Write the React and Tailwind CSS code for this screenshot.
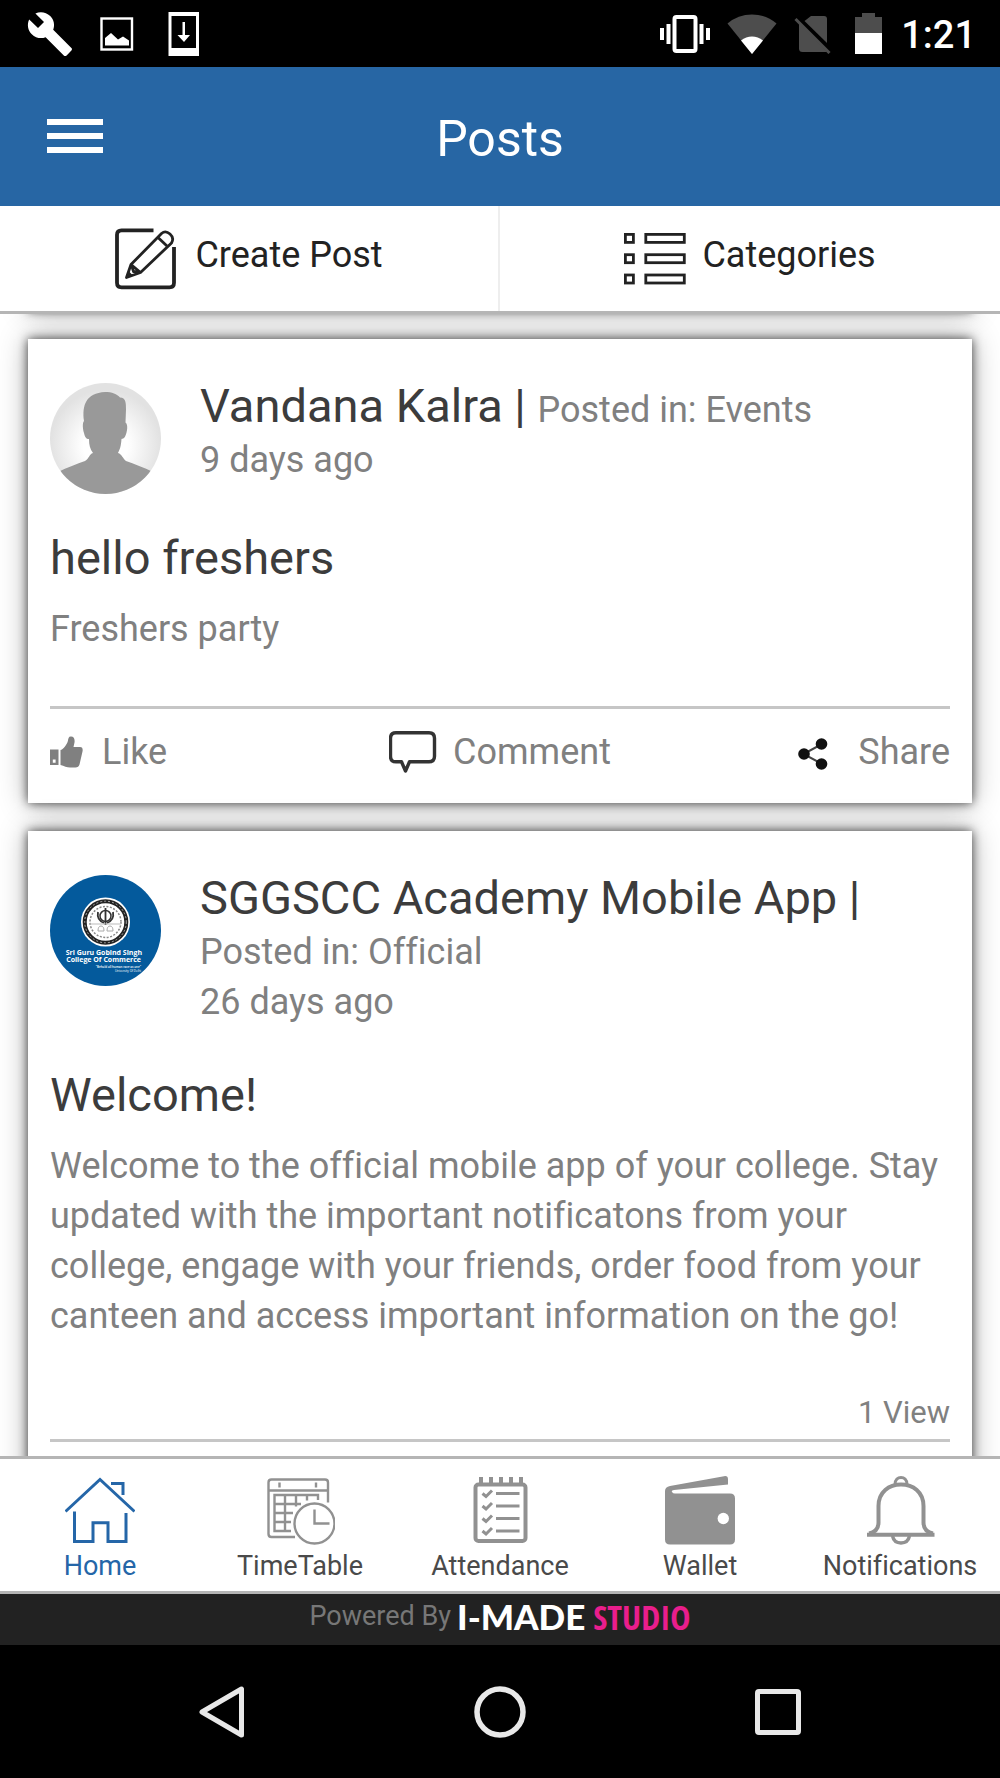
import React, { useState } from 'react';

/* ---------- Status bar icons ---------- */

const WrenchIcon = () => (
  <svg className="w-12 h-12" viewBox="0 0 24 24" fill="#fff">
    <path d="M22.7 19l-9.1-9.1c.9-2.3.4-5-1.5-6.9-2-2-5-2.4-7.4-1.3L9 6 6 9 1.6 4.7C.4 7.1.9 10.1 2.9 12.1c1.9 1.9 4.6 2.4 6.9 1.5l9.1 9.1c.4.4 1 .4 1.4 0l2.3-2.3c.5-.4.5-1.1.1-1.4z" />
  </svg>
);

const ImageIcon = () => (
  <svg className="w-[34px] h-[34px]" viewBox="0 0 34 34">
    <rect x="1.5" y="1.5" width="30.5" height="31" fill="none" stroke="#fff" strokeWidth="2.4" />
    <path d="M5 28.5V21l6-5 7 6.5 5-3 6 4v5z" fill="#fff" />
  </svg>
);

const DownloadIcon = () => (
  <svg className="w-8 h-11" viewBox="0 0 32 44">
    <path d="M0.5 0h30.5v44H0.5zM3.5 4v32h24.5V4z" fill="#fff" fillRule="evenodd" />
    <path d="M14.5 10h2.5v13h5L16 30l-6.5-7h5z" fill="#fff" />
  </svg>
);

const VibrateIcon = () => (
  <svg className="w-[50px] h-10" viewBox="0 0 50 40" fill="#fff">
    <rect x="14.5" y="3" width="21" height="34" rx="2" fill="none" stroke="#fff" strokeWidth="4" />
    <rect x="0" y="14" width="4" height="12" />
    <rect x="6.5" y="10" width="4" height="20" />
    <rect x="39.5" y="10" width="4" height="20" />
    <rect x="46" y="14" width="4" height="12" />
  </svg>
);

const WifiIcon = () => (
  <svg className="w-[50px] h-10" viewBox="0 0 50 40">
    <path d="M25 40L0.5 9.5Q11 0.5 25 0.5T49.5 9.5z" fill="#4d4d4d" />
    <path d="M25 40L14 26.5Q19 22.5 25 22.5T36 26.5z" fill="#fff" />
  </svg>
);

const NoSimIcon = () => (
  <svg className="w-[38px] h-10" viewBox="0 0 38 40">
    <path d="M17 2h13q3 0 3 3v24L10.5 7z" fill="#4d4d4d" />
    <path d="M5 9L33 38H8.5q-3.5 0-3.5-3.5z" fill="#4d4d4d" />
    <path d="M1.5 5L35.5 39" stroke="#4d4d4d" strokeWidth="3" />
  </svg>
);

const BatteryIcon = () => (
  <svg className="w-[27px] h-[41px]" viewBox="0 0 27 41">
    <path d="M7 0h13v4h7v17H0V4h7z" fill="#4d4d4d" />
    <rect y="20" width="27" height="21" fill="#fff" />
  </svg>
);

/* ---------- Toolbar icons ---------- */

const CreateIcon = () => (
  <svg className="w-[62px] h-[62px]" viewBox="0 0 62 62" fill="none" stroke="#222" strokeWidth="3.8">
    <path d="M38.5 2.3H6.5q-4.5 0-4.5 4.5v48q0 4.5 4.5 4.5h48q4.5 0 4.5-4.5V19" />
    <g strokeWidth="2.8" strokeLinejoin="round">
      <path d="M11.5 49.5L16 36.5L46.5 5.5q4-3.5 8.5 0.5t1.5 9L25.5 44.5z" />
      <path d="M43 9.5l9 8.5M16 36.5l9.5 8M16.5 37l2 6.5 6.5 1" />
    </g>
    <path d="M11 50l2.5-7 4.5 4.5z" fill="#222" stroke="none" />
  </svg>
);

const ListIcon = () => (
  <svg className="w-[62px] h-[52px]" viewBox="0 0 62 52" fill="none" stroke="#222" strokeWidth="2.8">
    {[1.4, 21.7, 42].map((y) => (
      <g key={y}>
        <rect x="1.4" y={y} width="8" height="8" />
        <rect x="21.8" y={y} width="38.5" height="8" />
      </g>
    ))}
  </svg>
);

/* ---------- Post icons ---------- */

const LikeIcon = () => (
  <svg className="w-[33px] h-8" viewBox="0 0 33 32">
    <path d="M0 13.5h8.5V29H0zM2.8 23.5v3.2h2.8v-3.2z" fill="#808080" fillRule="evenodd" />
    <path d="M10.5 14C13 13.5 17 9 18 4.5 18.5 1 19.5 0.5 21 0.5c3 0 4 3 3.5 6L23.5 11H30c2.5 0 3 2 2.5 4.5L29.5 28.5c-0.5 2-2 3-4 3h-5.5c-3 0-6-1.5-9.5-2.5z" fill="#808080" />
  </svg>
);

const CommentIcon = () => (
  <svg className="w-12 h-[42px]" viewBox="0 0 48 42">
    <path d="M7 1.8h33q5.5 0 5.5 5.5v18q0 5.5-5.5 5.5H20.5L16.5 40l-4-9.2H7q-5.5 0-5.5-5.5v-18q0-5.5 5.5-5.5z" fill="none" stroke="#333" strokeWidth="3.4" strokeLinejoin="round" />
  </svg>
);

const ShareIcon = () => (
  <svg className="w-[30px] h-8 mt-1" viewBox="0 0 30 32">
    <path d="M24 6L5.5 16L24 26" fill="none" stroke="#444" strokeWidth="2" />
    <g fill="#111">
      <circle cx="23.5" cy="6" r="5.8" />
      <circle cx="6" cy="16" r="5.8" />
      <circle cx="23.5" cy="26" r="5.8" />
    </g>
  </svg>
);

/* ---------- Avatars ---------- */

const PersonAvatar = () => (
  <svg className="w-[111px] h-[111px] rounded-full shrink-0 mt-1" viewBox="0 0 111 111">
    <defs>
      <radialGradient id="glow" cx="50%" cy="56%" r="50%">
        <stop offset="40%" stopColor="#fff" />
        <stop offset="100%" stopColor="#e2e2e2" />
      </radialGradient>
    </defs>
    <rect width="111" height="111" fill="url(#glow)" />
    <path
      d="M34 38C32 22 36 10 55 9c7 0 12 2 15 5.5 6 0 6 6 6 12l-0.5 13c3 2 1.5 10 0 13-1 3-2.5 3-4 3.500C71 63 70 66 68 70c4 1 5 6 8 8 8 3 18 6.500 27 11v22H8V89c9-4.500 19-8 27-11 4-2 4-7 8-8-3-4-4-8-4-14-3 0-4-2-5-6-1-3-2-10 0-12z"
      fill="#999"
    />
  </svg>
);

const CollegeAvatar = () => (
  <svg className="w-[111px] h-[111px] rounded-full shrink-0 mt-1" viewBox="0 0 111 111" fontFamily="Open Sans, sans-serif">
    <rect width="111" height="111" fill="#045a9c" />
    <circle cx="55.5" cy="47" r="24.5" fill="#fff" />
    <circle cx="55.5" cy="47" r="20.8" fill="none" stroke="#222" strokeWidth="4" />
    <circle cx="55.5" cy="47" r="20.8" fill="none" stroke="#aaa" strokeWidth="1" strokeDasharray="2 2" />
    <circle cx="55.5" cy="47" r="15.5" fill="none" stroke="#888" strokeWidth="1.5" strokeDasharray="2 1.5" />
    <circle cx="55.5" cy="41" r="5.5" fill="none" stroke="#333" strokeWidth="1.5" />
    <path d="M55.5 33v17M48 37q-1.5 8 6 11M63 37q1.5 8-6 11" fill="none" stroke="#333" strokeWidth="1.8" />
    <path d="M40 49h31" stroke="#bbb" strokeWidth="1" />
    <path d="M48 56q0-5 3-5t3 5zM57 56q0-5 3-5t3 5z" fill="none" stroke="#aaa" strokeWidth="1" />
    <g fill="#fff" textAnchor="end">
      <text x="92" y="80" fontSize="7" fontWeight="700">Sri Guru Gobind Singh</text>
      <text x="91" y="87" fontSize="7" fontWeight="700">College Of Commerce</text>
      <text x="91" y="93" fontSize="3" fontWeight="600">"Behold all human race as one"</text>
      <text x="91" y="97" fontSize="3">University Of Delhi</text>
    </g>
  </svg>
);

/* ---------- Tab icons ---------- */

const HomeIcon = () => (
  <svg className="w-[70px] h-[70px]" viewBox="0 0 70 70" fill="none" stroke="#2566a8" strokeWidth="3">
    <path d="M0.5 35.5L35 3.5l34.5 32M46 7.5h12V19M9.5 35.5v30h18.5V46.8h15v18.7h18V37" />
  </svg>
);

const TimeTableIcon = () => (
  <svg className="w-[70px] h-[70px]" viewBox="0 0 70 70" fill="none" stroke="#919191" strokeWidth="2.4">
    <path d="M30 61H6.5q-3 0-3-3V6.5q0-3 3-3H60q3 0 3 3V26.5M3.5 14.5H63M14.5 6.5v5M51 6.5v5" />
    <path d="M26 55H9.5V19H53v5M20 19v36M31 19v11.5M42 19v5.5M9.5 28H36M9.5 37H28M9.5 46H26" />
    <circle cx="49.5" cy="47.5" r="20" />
    <path d="M49.5 33.5v14H64.5" />
  </svg>
);

const AttendanceIcon = () => (
  <svg className="w-[70px] h-[70px]" viewBox="0 0 70 70" fill="none" stroke="#919191" strokeWidth="3">
    <rect x="10.5" y="8.5" width="50" height="56.5" rx="3" strokeWidth="4" />
    <path d="M16 1v7M26 1v7M36 1v7M46 1v7M56 1v7" strokeWidth="4" />
    {[17.5, 30, 42.5, 55].map((y) => (
      <path key={y} d={`M31 ${y}H54.5M17.5 ${y}l3.5 3 6-6`} />
    ))}
  </svg>
);

const WalletIcon = () => (
  <svg className="w-[70px] h-[70px]" viewBox="0 0 70 70" fill="#919191">
    <path d="M5 10L59 0.2q4-0.7 4 3v5.3L9 14q-3 0.5-2 2t3 1.5H65q5 0 5 5V63.5q0 5-5 5H5q-5 0-5-5V15q0-4 5-5z" />
    <circle cx="58.3" cy="42.5" r="5.7" fill="#fff" />
  </svg>
);

const BellIcon = () => (
  <svg className="w-[70px] h-[70px]" viewBox="0 0 70 70" fill="none" stroke="#919191" strokeWidth="4">
    <path d="M2 58.8H69.5" />
    <path d="M4 57.5q9.5-2 9.5-11V30C13.5 16 24 8.5 36 8.5S58.5 16 58.5 30V46.5q0 9 9.5 11" />
    <path d="M30 8.5C30 3.5 33 1.5 36 1.5s6 2 6 7" strokeWidth="3" />
    <path d="M27.5 60q1.5 7 8.5 7t8.5-7" strokeWidth="3.5" />
  </svg>
);

const posts = [
  {
    id: 1,
    avatar: <PersonAvatar />,
    author: 'Vandana Kalra |',
    category: 'Events',
    time: '9 days ago',
    title: 'hello freshers',
    body: 'Freshers party',
  },
  {
    id: 2,
    avatar: <CollegeAvatar />,
    author: 'SGGSCC Academy Mobile App |',
    category: 'Official',
    time: '26 days ago',
    title: 'Welcome!',
    body: 'Welcome to the official mobile app of your college. Stay updated with the important notificatons from your college, engage with your friends, order food from your canteen and access important information on the go!',
    views: '1 View',
  },
];

const tabs = [
  { name: 'Home', icon: <HomeIcon /> },
  { name: 'TimeTable', icon: <TimeTableIcon /> },
  { name: 'Attendance', icon: <AttendanceIcon /> },
  { name: 'Wallet', icon: <WalletIcon /> },
  { name: 'Notifications', icon: <BellIcon /> },
];

function PostCard({ post }) {
  return (
    <article className="shrink-0 bg-white px-[22px] pt-10 pb-[26px] shadow-[0_0_10px_rgba(0,0,0,0.7),0_0_28px_rgba(0,0,0,0.3)]">
      <div className="flex items-start gap-[39px]">
        {post.avatar}
        <div className="flex-1 pb-1 text-4xl leading-[50px] text-[#808080]">
          <p>
            <span className="text-[47px] leading-[54px] text-[#3c3c3c]">{post.author}{' '}</span>
            Posted in: {post.category}
          </p>
          <p>{post.time}</p>
        </div>
      </div>

      <h2 className="mt-9 text-[47px] leading-[56px] text-[#3c3c3c]">{post.title}</h2>
      <p className="mt-[18px] mb-[52px] text-4xl leading-[50px] text-[#808080]">{post.body}</p>

      {post.views && <p className="mb-[6px] text-right text-[31px] leading-10 text-[#808080]">{post.views}</p>}

      <div className="grid grid-cols-3 border-t-[3px] border-[#c6c6c6] pt-[18px] text-4xl leading-[50px] text-[#808080]">
        <button className="flex items-center gap-[19px] justify-self-start"><LikeIcon />Like</button>
        <button className="flex items-center gap-4 justify-self-center"><CommentIcon />Comment</button>
        <button className="flex items-center gap-[30px] justify-self-end"><ShareIcon />Share</button>
      </div>
    </article>
  );
}

export default function App() {
  const [active, setActive] = useState('Home');

  return (
    <div className="h-screen flex flex-col bg-white font-[Roboto,sans-serif] [font-variant-ligatures:none] overflow-hidden">
      {/* Status bar */}
      <div className="flex h-[67px] shrink-0 items-center justify-between bg-black pl-[26px] pr-6">
        <div className="flex items-center gap-[26px]">
          <WrenchIcon />
          <ImageIcon />
          <div className="pl-2"><DownloadIcon /></div>
        </div>
        <div className="flex items-center gap-[17px]">
          <VibrateIcon />
          <WifiIcon />
          <NoSimIcon />
          <div className="pl-[6px] pr-[2px]"><BatteryIcon /></div>
          <span className="pt-[2px] text-[38px] leading-10 font-medium text-white">1:21</span>
        </div>
      </div>

      {/* Header */}
      <header className="grid h-[139px] shrink-0 grid-cols-[1fr_auto_1fr] items-center bg-[#2766a4] px-[47px]">
        <button aria-label="Menu" className="flex w-14 flex-col gap-2 pb-[2px]">
          <span className="h-[6px] bg-white" />
          <span className="h-[6px] bg-white" />
          <span className="h-[6px] bg-white" />
        </button>
        <h1 className="pt-1 text-[50px] leading-[60px] text-white">Posts</h1>
      </header>

      {/* Toolbar */}
      <div className="grid shrink-0 grid-cols-2 border-b-[3px] border-[#b5b5b5] text-4xl text-[#222]">
        <button className="flex h-[105px] items-center justify-center gap-[18px] border-r-2 border-[#eee]">
          <CreateIcon />
          <span className="pb-2">Create Post</span>
        </button>
        <button className="flex h-[105px] items-center justify-center gap-4">
          <ListIcon />
          <span className="pb-2">Categories</span>
        </button>
      </div>

      {/* Feed, scrolled just past the end of an earlier card */}
      <main className="flex min-h-0 flex-1 flex-col gap-7 overflow-y-auto px-7 [scrollbar-width:none]">
        <div className="-mt-[27px] h-6 shrink-0 bg-white shadow-[0_0_10px_rgba(0,0,0,0.7),0_0_28px_rgba(0,0,0,0.3)]" />
        {posts.map((post) => <PostCard key={post.id} post={post} />)}
      </main>

      {/* Tabs */}
      <nav className="grid shrink-0 grid-cols-5 border-y-[3px] border-[#b5b5b5] bg-white pt-[17px] pb-[9px]">
        {tabs.map((tab) => (
          <button
            key={tab.name}
            onClick={() => setActive(tab.name)}
            className={`flex flex-col items-center gap-1 text-[27px] leading-8 ${active === tab.name ? 'text-[#2566a8]' : 'text-[#4a4a4a]'}`}
          >
            {tab.icon}
            {tab.name}
          </button>
        ))}
      </nav>

      {/* Powered by */}
      <footer className="flex h-[51px] shrink-0 items-start justify-center gap-[6px] bg-[#222]">
        <span className="text-[27px] leading-[44px] text-[#777]">Powered By</span>
        <a href="#studio" className="flex items-baseline gap-2 leading-[44px]">
          <span className="font-[Lato,sans-serif] text-[35px] font-black text-white">I-MADE</span>
          <span className="font-['Liberation_Sans_Narrow','Open_Sans_Condensed',Roboto,sans-serif] text-[34px] font-bold text-[#e91e8c]">STUDIO</span>
        </a>
      </footer>

      {/* System navigation */}
      <div className="grid h-[133px] shrink-0 grid-cols-[444px_112px_444px] items-center justify-center bg-black">
        <button aria-label="Back" className="justify-self-center">
          <svg className="w-[46px] h-[52px]" viewBox="0 0 46 52" fill="none" stroke="#e8e8e8" strokeWidth="5" strokeLinejoin="round">
            <path d="M42.5 3v46L3 26z" />
          </svg>
        </button>
        <button aria-label="Home screen" className="justify-self-center">
          <svg className="w-[52px] h-[52px]" viewBox="0 0 52 52" fill="none" stroke="#e8e8e8" strokeWidth="5.5">
            <circle cx="26" cy="26" r="23" />
          </svg>
        </button>
        <button aria-label="Recent apps" className="justify-self-center">
          <svg className="w-[46px] h-[46px]" viewBox="0 0 46 46" fill="none" stroke="#e8e8e8" strokeWidth="5">
            <rect x="2.5" y="2.5" width="41" height="41" rx="1.5" />
          </svg>
        </button>
      </div>
    </div>
  );
}
